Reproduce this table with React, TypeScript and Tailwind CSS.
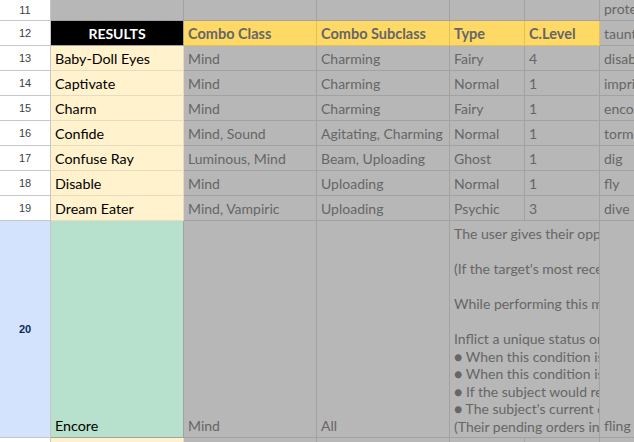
import React from "react";

const rows = [
  { n: 14, name: "Captivate", cls: "Mind", sub: "Charming", type: "Normal", lvl: "1", g: "impri" },
  { n: 15, name: "Charm", cls: "Mind", sub: "Charming", type: "Fairy", lvl: "1", g: "encor" },
  { n: 16, name: "Confide", cls: "Mind, Sound", sub: "Agitating, Charming", type: "Normal", lvl: "1", g: "torme" },
  { n: 17, name: "Confuse Ray", cls: "Luminous, Mind", sub: "Beam, Uploading", type: "Ghost", lvl: "1", g: "dig" },
  { n: 18, name: "Disable", cls: "Mind", sub: "Uploading", type: "Normal", lvl: "1", g: "fly" },
  { n: 19, name: "Dream Eater", cls: "Mind, Vampiric", sub: "Uploading", type: "Psychic", lvl: "3", g: "dive" },
];

const encoreLines = [
  "The user gives their opponent an encore, forcing it to repeat its last move.",
  "",
  "(If the target's most recent move cannot be repeated, this move fails.)",
  "",
  "While performing this move, the user cannot be interrupted.",
  "",
  "Inflict a unique status on the target for 3 turns:",
  "● When this condition is applied, the subject must repeat its last move.",
  "● When this condition is active, the subject cannot choose other moves.",
  "● If the subject would repeat a move it cannot use, the status ends.",
  "● The subject's current orders are replaced with the repeated move.",
  "(Their pending orders in this turn are cancelled.)",
];

const cellFont = { fontFamily: "Lato, 'Open Sans', sans-serif" };

function RowNum({ n, h }: { n: number; h: string }) {
  return (
    <div
      className={`w-[51px] ${h} shrink-0 border-r border-b border-[#c4c7c5] bg-white flex items-center justify-center text-[11px] text-[#3c4043]`}
      style={{ fontFamily: "'Liberation Sans', Arial, sans-serif" }}
    >
      {n}
    </div>
  );
}

function Gray({ w, children }: { w: string; children?: React.ReactNode }) {
  return (
    <div
      className={`${w} shrink-0 h-full bg-[#b7b7b7] border-r border-b border-[#a2a2a2] flex items-end overflow-hidden whitespace-nowrap pl-[4px] pb-[2px] text-[14px] leading-[18px] text-[#666666]`}
    >
      {children}
    </div>
  );
}

function Name({ children }: { children?: React.ReactNode }) {
  return (
    <div className="w-[133px] shrink-0 h-full bg-[#fff2cc] border-r border-b border-[#e6dcc0] flex items-end pl-[4px] pb-[2px] text-[14.3px] leading-[18px] text-black whitespace-nowrap">
      {children}
    </div>
  );
}

export default function App() {
  return (
    <div className="w-[634px] h-[442px] overflow-hidden bg-white" style={cellFont}>
      <div className="w-[700px]">
        {/* row 11 */}
        <div className="flex h-[21px]">
          <RowNum n={11} h="h-[21px]" />
          <Gray w="w-[133px]" />
          <Gray w="w-[133px]" />
          <Gray w="w-[133px]" />
          <Gray w="w-[75px]" />
          <Gray w="w-[75px]" />
          <Gray w="w-[100px]">prote</Gray>
        </div>

        {/* row 12 header */}
        <div className="flex h-[25px]">
          <RowNum n={12} h="h-[25px]" />
          <div className="w-[133px] shrink-0 h-full bg-black border-r border-b border-[#a2a2a2] flex items-end justify-center pb-[2px] text-white font-bold text-[14px] leading-[18px]">
            RESULTS
          </div>
          {["Combo Class", "Combo Subclass", "Type", "C.Level"].map((t, i) => (
            <div
              key={t}
              className={`${i < 2 ? "w-[133px]" : "w-[75px]"} shrink-0 h-full bg-[#ffd966] border-r border-b border-[#e3bf55] flex items-end pl-[4px] pb-[2px] font-bold text-[14.5px] leading-[18px] text-[#666666] whitespace-nowrap`}
            >
              {t}
            </div>
          ))}
          <Gray w="w-[100px]">taunt</Gray>
        </div>

        {/* row 13 */}
        <div className="flex h-[25px]">
          <RowNum n={13} h="h-[25px]" />
          <Name>Baby-Doll Eyes</Name>
          <Gray w="w-[133px]">Mind</Gray>
          <Gray w="w-[133px]">Charming</Gray>
          <Gray w="w-[75px]">Fairy</Gray>
          <Gray w="w-[75px]">4</Gray>
          <Gray w="w-[100px]">disab</Gray>
        </div>

        {rows.map((r) => (
          <div key={r.n} className="flex h-[25px]">
            <RowNum n={r.n} h="h-[25px]" />
            <Name>{r.name}</Name>
            <Gray w="w-[133px]">{r.cls}</Gray>
            <Gray w="w-[133px]">{r.sub}</Gray>
            <Gray w="w-[75px]">{r.type}</Gray>
            <Gray w="w-[75px]">{r.lvl}</Gray>
            <Gray w="w-[100px]">{r.g}</Gray>
          </div>
        ))}

        {/* row 20 */}
        <div className="flex h-[217px]">
          <div
            className="w-[51px] h-[217px] shrink-0 border-r border-b border-[#c4c7c5] bg-[#d3e3fd] flex items-center justify-center text-[11px] font-bold text-[#0b2a5c]"
            style={{ fontFamily: "'Liberation Sans', Arial, sans-serif" }}
          >
            20
          </div>
          <div className="w-[133px] shrink-0 h-full bg-[#b7e1cd] border-r border-b border-[#a2a2a2] flex items-end pl-[4px] pb-[2px] text-[14.3px] leading-[18px] text-black">
            Encore
          </div>
          <Gray w="w-[133px]">Mind</Gray>
          <Gray w="w-[133px]">All</Gray>
          <div className="w-[150px] shrink-0 h-full bg-[#b7b7b7] border-r border-b border-[#a2a2a2] flex flex-col justify-end overflow-hidden pl-[4px] pb-[2px] text-[14px] leading-[17.5px] text-[#666666] whitespace-nowrap">
            {encoreLines.map((l, i) => (
              <div key={i} className="h-[17.5px]">
                {l}
              </div>
            ))}
          </div>
          <Gray w="w-[100px]">fling</Gray>
        </div>

        {/* row 21 */}
        <div className="flex h-[25px]">
          <RowNum n={21} h="h-[25px]" />
          <div className="w-[133px] shrink-0 h-full bg-[#fff2cc] border-r border-b border-[#e6dcc0]" />
          <Gray w="w-[133px]" />
          <Gray w="w-[133px]" />
          <Gray w="w-[75px]" />
          <Gray w="w-[75px]" />
          <Gray w="w-[100px]" />
        </div>
      </div>
    </div>
  );
}
